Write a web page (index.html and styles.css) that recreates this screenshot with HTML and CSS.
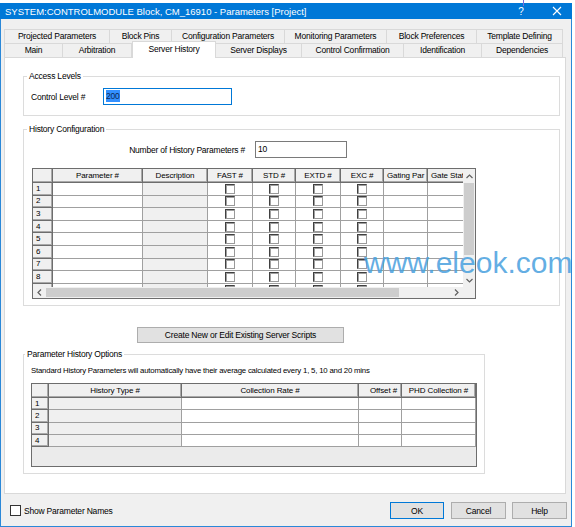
FILE: index.html
```html
<!DOCTYPE html>
<html lang="en">
<head>
  <meta charset="UTF-8" />
  <meta name="viewport" content="width=device-width, initial-scale=1.0"/>
  <title>Parameters</title>
  <link rel="stylesheet" href="styles.css">
</head>
<body>

<div class="window">
  <div class="titlebar">
    <span class="title">SYSTEM:CONTROLMODULE Block, CM_16910 - Parameters [Project]</span>
    <span class="title-help">?</span>
    <span class="title-close">
      <svg width="10" height="10" viewBox="0 0 10 10"><path d="M1 1L9 9M9 1L1 9" stroke="#fff" stroke-width="1.1"/></svg>
    </span>
  </div>

  <div class="tabs">
    <div class="tab-row back">
      <div class="tab">Projected Parameters</div>
      <div class="tab">Block Pins</div>
      <div class="tab">Configuration Parameters</div>
      <div class="tab">Monitoring Parameters</div>
      <div class="tab">Block Preferences</div>
      <div class="tab">Template Defining</div>
    </div>
    <div class="tab-row front">
      <div class="tab">Main</div>
      <div class="tab">Arbitration</div>
      <div class="tab active">Server History</div>
      <div class="tab">Server Displays</div>
      <div class="tab">Control Confirmation</div>
      <div class="tab">Identification</div>
      <div class="tab">Dependencies</div>
    </div>
  </div>

  <div class="tab-panel">
    <fieldset class="group access-group">
      <legend>Access Levels</legend>
      <div class="field-row">
        <span class="control-label">Control Level #</span>
        <div class="textbox focused"><span class="selection">200</span></div>
      </div>
    </fieldset>

    <fieldset class="group history-group">
      <legend>History Configuration</legend>
      <div class="field-row">
        <span class="count-label">Number of History Parameters #</span>
        <div class="textbox count-box">10</div>
      </div>

      <div class="grid history-grid">
        <div class="grid-view">
          <table class="cells history-cells">
            <colgroup>
              <col class="c-rh"><col class="c-param"><col class="c-desc"><col class="c-fast"><col class="c-std">
              <col class="c-extd"><col class="c-exc"><col class="c-gating"><col class="c-gate">
            </colgroup>
            <tr class="head">
              <th></th><th>Parameter #</th><th>Description</th><th>FAST #</th><th>STD #</th>
              <th>EXTD #</th><th>EXC #</th><th class="left">Gating Par</th><th class="left">Gate State</th>
            </tr>
            <tr><td class="row-head">1</td><td></td><td class="readonly"></td><td><span class="check"></span></td><td><span class="check"></span></td><td><span class="check"></span></td><td><span class="check"></span></td><td></td><td></td></tr>
            <tr><td class="row-head">2</td><td></td><td class="readonly"></td><td><span class="check"></span></td><td><span class="check"></span></td><td><span class="check"></span></td><td><span class="check"></span></td><td></td><td></td></tr>
            <tr><td class="row-head">3</td><td></td><td class="readonly"></td><td><span class="check"></span></td><td><span class="check"></span></td><td><span class="check"></span></td><td><span class="check"></span></td><td></td><td></td></tr>
            <tr><td class="row-head">4</td><td></td><td class="readonly"></td><td><span class="check"></span></td><td><span class="check"></span></td><td><span class="check"></span></td><td><span class="check"></span></td><td></td><td></td></tr>
            <tr><td class="row-head">5</td><td></td><td class="readonly"></td><td><span class="check"></span></td><td><span class="check"></span></td><td><span class="check"></span></td><td><span class="check"></span></td><td></td><td></td></tr>
            <tr><td class="row-head">6</td><td></td><td class="readonly"></td><td><span class="check"></span></td><td><span class="check"></span></td><td><span class="check"></span></td><td><span class="check"></span></td><td></td><td></td></tr>
            <tr><td class="row-head">7</td><td></td><td class="readonly"></td><td><span class="check"></span></td><td><span class="check"></span></td><td><span class="check"></span></td><td><span class="check"></span></td><td></td><td></td></tr>
            <tr><td class="row-head">8</td><td></td><td class="readonly"></td><td><span class="check"></span></td><td><span class="check"></span></td><td><span class="check"></span></td><td><span class="check"></span></td><td></td><td></td></tr>
            <tr><td class="row-head">9</td><td></td><td class="readonly"></td><td><span class="check"></span></td><td><span class="check"></span></td><td><span class="check"></span></td><td><span class="check"></span></td><td></td><td></td></tr>
          </table>
        </div>

        <div class="vscroll">
          <span class="arrow up"><svg width="7" height="5" viewBox="0 0 7 5"><path d="M0.5 4L3.5 1L6.5 4" fill="none" stroke="#606060" stroke-width="1.2"/></svg></span>
          <span class="thumb"></span>
          <span class="track"></span>
          <span class="arrow down"><svg width="7" height="5" viewBox="0 0 7 5"><path d="M0.5 1L3.5 4L6.5 1" fill="none" stroke="#606060" stroke-width="1.2"/></svg></span>
        </div>

        <div class="hscroll">
          <span class="arrow left"><svg width="5" height="7" viewBox="0 0 5 7"><path d="M4 0.5L1 3.5L4 6.5" fill="none" stroke="#606060" stroke-width="1.2"/></svg></span>
          <span class="thumb"></span>
          <span class="track"></span>
          <span class="arrow right"><svg width="5" height="7" viewBox="0 0 5 7"><path d="M1 0.5L4 3.5L1 6.5" fill="none" stroke="#606060" stroke-width="1.2"/></svg></span>
        </div>

        <div class="corner"></div>
      </div>
    </fieldset>

    <button class="btn scripts-btn">Create New or Edit Existing Server Scripts</button>

    <fieldset class="group options-group">
      <legend>Parameter History Options</legend>
      <div class="note">Standard History Parameters will automatically have their average calculated every 1, 5, 10 and 20 mins</div>

      <div class="grid options-grid">
        <div class="grid-view">
          <table class="cells options-cells">
            <colgroup>
              <col class="c-rh2"><col class="c-type"><col class="c-rate"><col class="c-offset"><col class="c-phd">
            </colgroup>
            <tr class="head">
              <th></th><th>History Type #</th><th>Collection Rate #</th><th class="right">Offset #</th><th>PHD Collection #</th>
            </tr>
            <tr><td class="row-head">1</td><td class="readonly"></td><td></td><td></td><td></td></tr>
            <tr><td class="row-head">2</td><td class="readonly"></td><td></td><td></td><td></td></tr>
            <tr><td class="row-head">3</td><td class="readonly"></td><td></td><td></td><td></td></tr>
            <tr><td class="row-head">4</td><td class="readonly"></td><td></td><td></td><td></td></tr>
          </table>
        </div>
      </div>
    </fieldset>
  </div>

  <div class="footer">
    <span class="checkbox"></span>
    <span class="checkbox-label">Show Parameter Names</span>
    <button class="btn default">OK</button>
    <button class="btn">Cancel</button>
    <button class="btn">Help</button>
  </div>
</div>

<div class="watermark">www.eleok.com</div>
<div class="cursor-mark"></div>

</body>
</html>
```

FILE: styles.css
```css
* {
  box-sizing: border-box;
}

html, body {
  margin: 0;
  padding: 0;
  background: #fff;
}

body {
  font-family: "Liberation Sans", Arial, sans-serif;
  font-size: 8.5px;
  letter-spacing: -0.2px;
  color: #000;
}

/* dialog frame */
.window {
  width: 572px;
  height: 524px;
  margin-top: 3px;
  background: #f0f0f0;
  border: 1px solid #2b88d8;
  border-top: 0;
}

.titlebar {
  display: flex;
  align-items: center;
  height: 16px;
  margin: 0 -1px;
  padding-left: 5px;
  background: #0078d7;
  color: #fff;
  letter-spacing: 0;
}

.title {
  flex: 1;
  font-size: 9.5px;
  white-space: nowrap;
}

.title-help {
  width: 20px;
  margin-right: 10px;
  text-align: center;
  font-size: 10px;
}

.title-close {
  width: 31px;
  display: flex;
  justify-content: center;
}

/* tab strip, two rows */
.tabs {
  padding: 10px 0 0 3px;
}

.tab-row {
  display: grid;
  height: 14px;
}

.tab-row.back {
  grid-template-columns: 106px 62px 113px 102px 90px 86px;
}

.tab-row.front {
  grid-template-columns: 59px 69px 84px 86px 102px 78px 81px;
}

.tab {
  background: #f0f0f0;
  border-top: 1px solid #d9d9d9;
  border-right: 1px solid #d9d9d9;
  text-align: center;
  line-height: 13px;
  white-space: nowrap;
  overflow: hidden;
}

.tab:first-child {
  border-left: 1px solid #d9d9d9;
}

.tab.active {
  position: relative;
  z-index: 1;
  margin: -2px 0 -1px;
  background: #fff;
  border-left: 1px solid #d9d9d9;
  line-height: 15px;
}

.tab-panel {
  width: 562px;
  height: 437px;
  margin-left: 3px;
  padding: 13px 0 0 18px;
  background: #fff;
  border: 1px solid #d9d9d9;
}

/* group boxes */
.group {
  width: 537px;
  min-width: 0;
  margin: 0;
  padding: 0 0 0 7px;
  border: 1px solid #dcdcdc;
}

.group legend {
  height: 10px;
  line-height: 10px;
  margin-left: -4px;
  padding: 0 2px;
}

.access-group {
  height: 45px;
}

.history-group {
  height: 182px;
  margin-top: 8px;
}

.options-group {
  width: 462px;
  height: 125px;
  margin-top: 6px;
}

.options-group legend {
  margin-left: -6px;
}

.field-row {
  display: flex;
  align-items: center;
  margin-top: 7px;
}

.control-label {
  width: 72px;
}

.count-label {
  width: 214px;
  margin-right: 10px;
  text-align: right;
}

.textbox {
  height: 17px;
  padding: 0 2px;
  line-height: 15px;
  border: 1px solid #7a7a7a;
  background: #fff;
}

.textbox.focused {
  width: 129px;
  border-color: #0078d7;
}

.count-box {
  width: 92px;
}

.selection {
  display: inline-block;
  background: #3390ff;
  color: #0c2a55;
  line-height: 12px;
}

/* data grids */
.grid {
  display: grid;
  margin-top: 10px;
  margin-left: 1px;
  border: 1px solid #6d6d6d;
}

.history-grid {
  width: 444px;
  height: 131px;
  grid-template-columns: 430px 12px;
  grid-template-rows: 118px 11px;
}

.grid-view {
  overflow: hidden;
  background: #fff;
}

.cells {
  border-collapse: separate;
  border-spacing: 0;
  table-layout: fixed;
  font-size: 8px;
  letter-spacing: -0.1px;
}

.history-cells {
  width: 439px;
}

.c-rh { width: 20px; }
.c-param { width: 90px; }
.c-desc { width: 65px; }
.c-fast { width: 45px; }
.c-std { width: 43px; }
.c-extd { width: 45px; }
.c-exc { width: 43px; }
.c-gating { width: 44px; }
.c-gate { width: 44px; }

.cells th,
.cells td {
  padding: 0;
  font-weight: normal;
  white-space: nowrap;
  overflow: hidden;
}

.cells tr.head {
  height: 14px;
}

.cells tr {
  height: 12.6px;
}

.cells th {
  background: #f0f0f0;
  border-right: 1px solid #6d6d6d;
  border-bottom: 1px solid #6d6d6d;
  box-shadow: inset -1px -1px 0 #a9a9a9;
  text-align: center;
}

.cells th.left {
  text-align: left;
  padding-left: 3px;
}

.cells th.right {
  text-align: right;
  padding-right: 4px;
}

.cells td {
  border-right: 1px solid #a0a0a0;
  border-bottom: 1px solid #a0a0a0;
  line-height: 10px;
}

.cells td.row-head {
  background: #f0f0f0;
  border-right-color: #6d6d6d;
  border-bottom-color: #6d6d6d;
  box-shadow: inset -1px -1px 0 #a9a9a9;
  padding-left: 3px;
}

.cells td.readonly {
  background: #f0f0f0;
}

.check {
  display: block;
  width: 10px;
  height: 10px;
  margin: 0 auto;
  background: #fff;
  border: 1px solid;
  border-color: #404040 #9a9a9a #9a9a9a #404040;
  box-shadow: inset 1px 1px 0 #a0a0a0;
}

/* scroll bars */
.vscroll,
.hscroll,
.corner {
  background: #f0f0f0;
}

.vscroll {
  display: flex;
  flex-direction: column;
  align-items: center;
}

.vscroll .arrow {
  height: 14px;
  display: flex;
  align-items: center;
  justify-content: center;
}

.vscroll .thumb {
  width: 10px;
  height: 72px;
  background: #cdcdcd;
}

.vscroll .track {
  flex: 1;
}

.hscroll {
  display: flex;
  align-items: center;
}

.hscroll .arrow {
  width: 13px;
  height: 11px;
  display: flex;
  align-items: center;
  justify-content: center;
}

.hscroll .thumb {
  width: 353px;
  height: 9px;
  background: #cdcdcd;
}

.hscroll .track {
  flex: 1;
}

/* buttons */
.btn {
  height: 17px;
  padding: 0;
  font-family: inherit;
  font-size: 8.5px;
  letter-spacing: -0.2px;
  color: #000;
  background: #e1e1e1;
  border: 1px solid #adadad;
  border-radius: 0;
}

.btn.default {
  border-color: #0078d7;
}

.scripts-btn {
  display: block;
  width: 207px;
  height: 16px;
  margin: 21px 0 0 114px;
}

.note {
  margin-top: 6px;
  line-height: 11px;
  font-size: 7.8px;
  white-space: nowrap;
}

.options-grid {
  width: 446px;
  height: 84px;
  margin-top: 7px;
  margin-left: 0;
}

.options-grid .grid-view {
  background: #ebebeb;
}

.options-cells {
  width: 444px;
}

.options-cells tr {
  height: 12.3px;
}

.c-rh2 { width: 17px; }
.c-type { width: 133px; }
.c-rate { width: 177px; }
.c-offset { width: 43px; }
.c-phd { width: 74px; }

.options-cells td {
  background: #fff;
}

/* bottom bar */
.footer {
  display: flex;
  align-items: center;
  padding: 8px 4px 0 9px;
}

.checkbox {
  width: 11px;
  height: 11px;
  background: #fff;
  border: 1px solid #333;
}

.checkbox-label {
  margin-left: 3px;
}

.footer .btn {
  width: 55px;
  margin-left: 6px;
}

.footer .btn.default {
  width: 54px;
  margin-left: auto;
}

.footer .btn.default + .btn {
  margin-left: 7px;
}

.watermark {
  position: absolute;
  left: 364px;
  top: 248px;
  font-size: 30px;
  letter-spacing: 0;
  line-height: 1;
  color: rgba(72, 160, 222, 0.85);
  white-space: nowrap;
}

.cursor-mark {
  position: absolute;
  left: 523px;
  top: 0;
  width: 1px;
  height: 6px;
  background: #7b6cd9;
}
```
